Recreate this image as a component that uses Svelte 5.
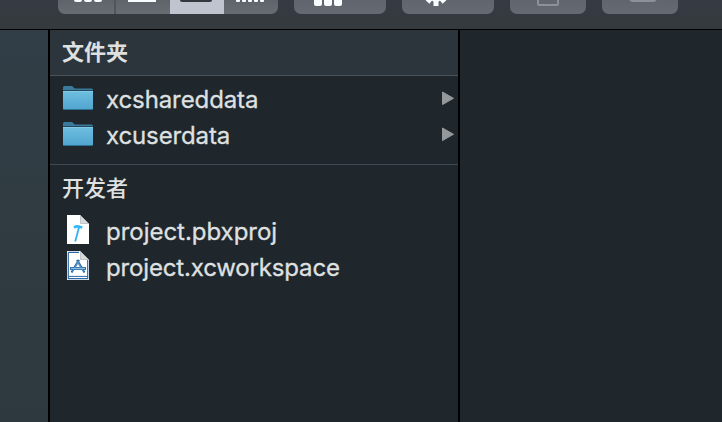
<script>
  const folders = [
    { name: 'xcshareddata', spacing: -0.1 },
    { name: 'xcuserdata', spacing: -0.12 }
  ];
  const files = [
    { name: 'project.pbxproj', kind: 'project', spacing: -0.03 },
    { name: 'project.xcworkspace', kind: 'workspace', spacing: -0.16 }
  ];
</script>

<div class="window">
  <header class="toolbar">
    <div class="segments">
      <span class="seg first"><svg width="57" height="14" fill="#f8fcff"><rect x="16" y="-6" width="8" height="8" rx="2"/><rect x="26" y="-6" width="8" height="8" rx="2"/><rect x="36" y="-6" width="8" height="8" rx="2"/></svg></span>
      <span class="seg second"><svg width="54" height="14" fill="#f8fcff"><rect x="12" width="28" height="2"/></svg></span>
      <span class="seg active"><svg width="54" height="14" fill="#343940"><rect x="10" y="-5" width="32" height="7" rx="2"/></svg></span>
      <span class="seg last"><svg width="54" height="14" fill="#f8fcff"><rect x="12" y="-3" width="4" height="5" rx="1"/><rect x="18" y="-3" width="4" height="5" rx="1"/><rect x="24" y="-3" width="4" height="5" rx="1"/><rect x="30" y="-3" width="4" height="5" rx="1"/><rect x="36" y="-3" width="4" height="5" rx="1"/></svg></span>
    </div>
    <div class="button wide"><svg width="92" height="14" fill="#f8fcff"><rect x="20" y="-2" width="8" height="8" rx="2"/><rect x="30" y="-2" width="8" height="8" rx="2"/><rect x="40" y="-2" width="8" height="8" rx="2"/></svg></div>
    <div class="button wide"><svg width="92" height="14"><circle cx="34" cy="-5" r="7" fill="#f8fcff"/><path d="M34 -1V6M29 -2L25.5 2M39 -2L42.5 2" stroke="#f8fcff" stroke-width="5"/></svg></div>
    <div class="button"><svg width="76" height="14" fill="none" stroke="#8b9099" stroke-width="2"><rect x="28" y="-12" width="20" height="17" rx="1"/></svg></div>
    <div class="button"><svg width="76" height="14"><rect x="27" y="-10" width="28" height="12" rx="4" fill="#8b9099"/></svg></div>
  </header>

  <main>
    <aside></aside>
    <section class="column">
      <h2 class="folders">文件夹</h2>
      <ul class="folder-list">
        {#each folders as folder}
          <li>
            <svg class="icon" width="32" height="36" viewBox="0 0 32 36">
              <defs>
                <linearGradient id="folder-face" x1="0" y1="0" x2="0" y2="1"><stop stop-color="#70bfe1"/><stop offset="1" stop-color="#50a5cf"/></linearGradient>
              </defs>
              <path d="M1 12V6.5Q1 5 2.5 5H9Q10.5 5 11.4 6.2T13.5 7.5H29.5Q31 7.5 31 9V12Z" fill="#3a7b9d"/>
              <path d="M1 9.5H31V27.3Q31 28.5 29.8 28.5H2.2Q1 28.5 1 27.3Z" fill="url(#folder-face)"/>
              <path d="M1 9.5H31" stroke="#25485d"/>
              <path d="M1 10.5H31" stroke="#83cae6"/>
              <path d="M1.5 28.5H30.5" stroke="#2c7196"/>
            </svg>
            <span class="name" style:letter-spacing="{folder.spacing}px">{folder.name}</span>
            <svg class="arrow" width="13" height="18" viewBox="0 0 13 18"><path d="M1.5 2L12.5 8.3L1.5 14.6Z" fill="#94989a" stroke="#94989a" stroke-linejoin="round"/></svg>
          </li>
        {/each}
      </ul>
      <h2 class="developer">开发者</h2>
      <ul class="file-list">
        {#each files as file}
          <li>
            <svg class="icon" width="32" height="36" viewBox="0 0 32 36">
              <path d="M5 2H18L27 11V31H5Z" fill="#fff"/>
              {#if file.kind === 'project'}
                <path d="M12 14.6Q14.5 12.7 17.5 13.8L20.3 14.5" fill="none" stroke="#35b8fa" stroke-width="2.6"/>
                <path d="M17 14.5L13.2 28.5" stroke="#35aef5" stroke-width="1.8"/>
              {:else}
                <path d="M6.3 3.3H17M25.7 11V29.7H6.3V3.3" fill="none" stroke="#2c69a7" stroke-width="1.2"/>
                <path d="M6.5 27.4H25.5" stroke="#2c69a7"/>
                <g fill="none" stroke="#286ca9"><path d="M17 11L9.5 23.5M15 11L22.5 23.5" stroke-width="2.2"/><path d="M8 19.5H24" stroke-width="2.8"/><path d="M9 19.5H23" stroke="#a8d5f2" stroke-width=".8"/><path d="M16.5 12.5L10.5 22.5M15.5 12.5L21.5 22.5" stroke="#86bbdf" stroke-width=".6"/></g>
              {/if}
              <path d="M18 2V11H27Z" fill="#d8d9db"/>
              <path d="M18.5 3V10.5H26" fill="none" stroke="#c1c3c6"/>
            </svg>
            <span class="name" style:letter-spacing="{file.spacing}px">{file.name}</span>
          </li>
        {/each}
      </ul>
    </section>
    <section class="empty"></section>
  </main>
</div>

<style>
  :global(body) { margin: 0; }
  * { box-sizing: border-box; }
  .window { width: 722px; height: 422px; display: flex; flex-direction: column; overflow: hidden; background: #1f262c; font-family: Inter, "Noto Sans CJK SC", sans-serif; color: #dfe0e0; }
  .toolbar { height: 30px; flex: none; display: flex; align-items: flex-start; gap: 16px; padding-left: 58px; border-bottom: 1px solid #000; background: linear-gradient(#363a43, #343a3d); }
  .segments { display: flex; width: 220px; height: 14px; border-radius: 0 0 7px 7px; overflow: hidden; background: linear-gradient(#5f646b, #686c72); }
  .seg { width: 54px; height: 14px; flex: none; }
  .seg.first { width: 58px; border-right: 2px solid #50555b; }
  .seg.active { background: #c0c4cf; }
  svg { display: block; }
  .button { width: 76px; height: 14px; border-radius: 0 0 7px 7px; overflow: hidden; background: linear-gradient(#60656e, #666a72); }
  .button.wide { width: 92px; }
  main { flex: 1; display: flex; min-height: 0; }
  aside { width: 50px; border-right: 2px solid #000; background: linear-gradient(#323e47, #2f3b40 60%, #2e393f); }
  .column { width: 410px; border-right: 2px solid #000; }
  .empty { flex: 1; }
  h2 { margin: 0; padding-left: 12px; font-family: "Noto Sans CJK SC", sans-serif; font-size: 22px; line-height: 40px; }
  .folders { height: 46px; font-weight: 700; background: #2d353c; border-bottom: 1px solid #4b545b; }
  .developer { height: 48px; font-weight: 500; line-height: 42px; border-top: 1px solid #424a51; }
  ul { list-style: none; margin: 0; padding: 0; }
  .folder-list { height: 88px; padding-top: 5px; }
  .file-list { padding-top: 1px; }
  li { height: 36px; display: flex; align-items: center; padding-left: 12px; }
  .name { margin-left: 12px; padding-top: 2px; font-size: 24px; line-height: 34px; white-space: nowrap; -webkit-text-stroke: 0.3px #dfe0e0; }
  .arrow { margin-left: auto; margin-right: 4px; }
</style>
